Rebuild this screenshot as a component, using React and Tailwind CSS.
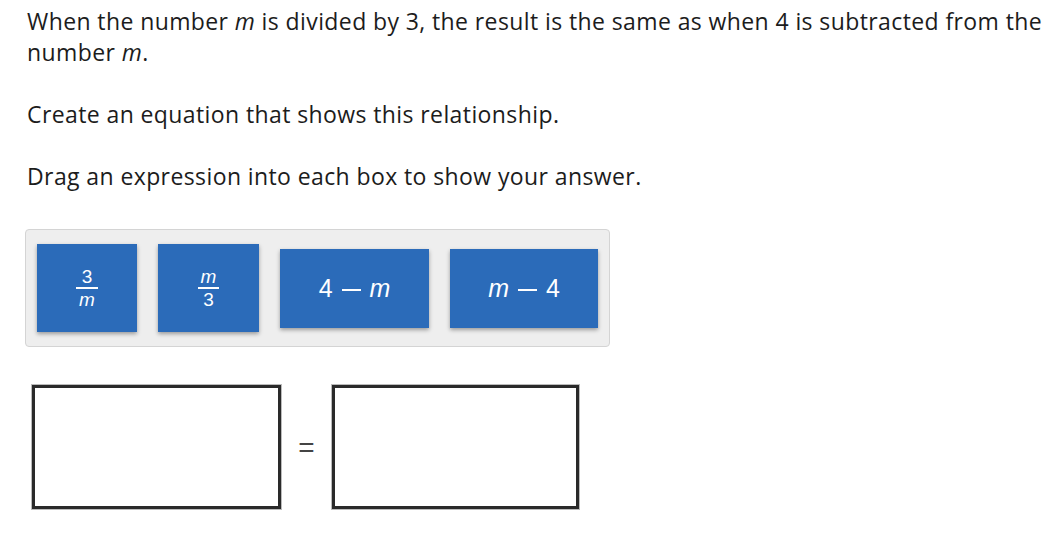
import React from 'react';

const tileBase =
    'bg-[#2b6bb9] text-white flex items-center justify-center shadow-[0_2px_4px_rgba(0,0,0,0.35)] font-["Liberation_Sans",Arial,sans-serif]';

const Fraction = ({ top, bottom }) => (
    <div className="flex flex-col items-center text-[19px] leading-[16px]">
        <span className="px-[3px] pb-[2px]">{top}</span>
        <span className="w-full border-t-[2px] border-white"></span>
        <span className="px-[3px] pt-[3px]">{bottom}</span>
    </div>
);

const Dash = () => <span className="inline-block w-[19px] h-[2px] bg-white mt-[3px]"></span>;

const App = () => {
    return (
        <div className="w-[1062px] h-[550px] bg-white overflow-hidden pl-[27px] pr-[8px] pt-[6px] text-[#1c1c1c] font-['Open_Sans',sans-serif] text-[23px] tracking-[0.4px] leading-[31px]">
            <p>
                When the number <i>m</i> is divided by 3, the result is the same as when 4 is subtracted from the number <i>m</i>.
            </p>
            <p className="mt-[31px]">Create an equation that shows this relationship.</p>
            <p className="mt-[31px]">Drag an expression into each box to show your answer.</p>

            <div className="mt-[37px] -ml-[2px] w-[585px] h-[118px] bg-[#eeeeee] border border-[#d4d4d4] rounded-[4px] flex items-center pl-[11px] gap-[21px] tracking-normal">
                <div className={`${tileBase} w-[100px] h-[88px]`}>
                    <Fraction top="3" bottom={<i>m</i>} />
                </div>
                <div className={`${tileBase} w-[101px] h-[88px]`}>
                    <Fraction top={<i>m</i>} bottom="3" />
                </div>
                <div className={`${tileBase} w-[149px] h-[79px] text-[25px] gap-[9px]`}>
                    <span>4</span>
                    <Dash />
                    <i>m</i>
                </div>
                <div className={`${tileBase} w-[148px] h-[79px] text-[25px] gap-[9px]`}>
                    <i>m</i>
                    <Dash />
                    <span>4</span>
                </div>
            </div>

            <div className="mt-[38px] ml-[5px] flex items-center tracking-normal">
                <div className="w-[249px] h-[124px] border-[3px] border-[#2a2a2a] outline outline-1 outline-[#bbbbbb]"></div>
                <div className="w-[51px] flex justify-center font-['Liberation_Sans',sans-serif] text-[#444] text-[28px]">=</div>
                <div className="w-[247px] h-[124px] border-[3px] border-[#2a2a2a] outline outline-1 outline-[#bbbbbb]"></div>
            </div>
        </div>
    );
};

export default App;
